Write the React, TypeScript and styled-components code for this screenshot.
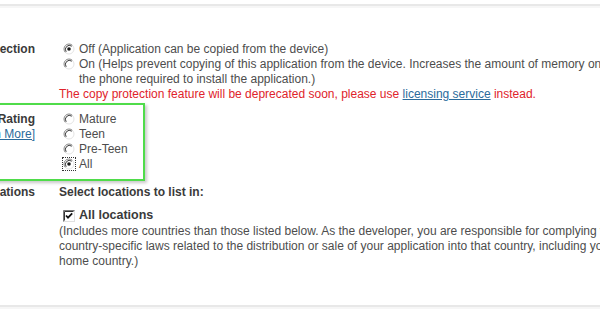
import React from 'react'
import styled, { createGlobalStyle } from 'styled-components';

const GlobalStyle = createGlobalStyle`
  html, body {
    margin: 0;
    padding: 0;
    background: #ffffff;
    overflow: hidden;
  }
  body {
    font-family: "Liberation Sans", Arial, sans-serif;
    font-size: 12px;
    color: #4d4d4d;
  }
`;

function RadioIcon({ checked, focused }: { checked?: boolean; focused?: boolean }) {
  return (
    <RadioBox $focused={focused}>
      <svg width="12" height="12" viewBox="0 0 12 12">
        <circle cx="6" cy="6" r="5" fill="#ffffff" />
        <path d="M2.46 9.54 A5 5 0 0 1 9.54 2.46" fill="none" stroke="#8a8a8a" strokeWidth="1" />
        <path d="M3.2 8.8 A4 4 0 0 1 8.8 3.2" fill="none" stroke="#3c3c3c" strokeWidth="1" />
        <path d="M9.54 2.46 A5 5 0 0 1 2.46 9.54" fill="none" stroke="#e4e4e4" strokeWidth="1" />
        {checked && <circle cx="6" cy="6" r="1.8" fill="#1a1a1a" />}
      </svg>
    </RadioBox>
  )
}

function CheckIcon() {
  return (
    <svg width="12" height="12" viewBox="0 0 12 12">
      <rect x="0.5" y="0.5" width="11" height="11" fill="#ffffff" stroke="#e0e0e0" />
      <path d="M0.5 11.5 V0.5 H11.5" fill="none" stroke="#7a7a7a" />
      <path d="M1.5 10.5 V1.5 H10.5" fill="none" stroke="#333333" />
      <path d="M3 5.5 L5 7.6 L9.2 3.4" fill="none" stroke="#111111" strokeWidth="1.8" />
    </svg>
  )
}

function App() {
  return (
    <>
      <GlobalStyle />
      <Page>
        <Separator />
        <Row $top={34}>
          <Label>Copy Protection</Label>
          <Field>
            <Option>
              <RadioIcon checked />
              <span>Off (Application can be copied from the device)</span>
            </Option>
            <Option>
              <RadioIcon />
              <span>
                On (Helps prevent copying of this application from the device. Increases the amount of memory on
                <br />
                the phone required to install the application.)
              </span>
            </Option>
            <Warning>
              The copy protection feature will be deprecated soon, please use <Link>licensing service</Link> instead.
            </Warning>
          </Field>
        </Row>

        <Highlight>
          <Row $top={0}>
            <Label>
              Content Rating
              <br />
              <Link>[Learn More]</Link>
            </Label>
            <Field>
              <Option>
                <RadioIcon />
                <span>Mature</span>
              </Option>
              <Option>
                <RadioIcon />
                <span>Teen</span>
              </Option>
              <Option>
                <RadioIcon />
                <span>Pre-Teen</span>
              </Option>
              <Option>
                <RadioIcon checked focused />
                <span>All</span>
              </Option>
            </Field>
          </Row>
        </Highlight>

        <Row $top={4}>
          <Label>Locations</Label>
          <Field>
            <FieldTitle>Select locations to list in:</FieldTitle>
            <CheckRow>
              <CheckIcon />
              <CheckLabel>All locations</CheckLabel>
            </CheckRow>
            <Note>
              (Includes more countries than those listed below. As the developer, you are responsible for complying with
              <br />
              country-specific laws related to the distribution or sale of your application into that country, including your
              <br />
              home country.)
            </Note>
          </Field>
        </Row>
        <Separator $top={36} />
      </Page>
    </>
  )
}

const Page = styled.div`
  padding-top: 4px;
  width: 600px;
  height: 315px;
  overflow: hidden;
`;

const Separator = styled.div<{ $top?: number }>`
  height: 2px;
  background: #e8e8e8;
  margin-top: ${p => p.$top ?? 0}px;
  border-bottom: 2px solid #f6f6f6;
`;

const Row = styled.div<{ $top: number }>`
  display: grid;
  grid-template-columns: 120px 1fr;
  column-gap: 24px;
  margin-top: ${p => p.$top}px;
  margin-left: -85px;
  line-height: 15px;
`;

const Highlight = styled.div`
  box-sizing: border-box;
  margin-top: 1px;
  margin-left: -10px;
  width: 155px;
  padding: 7px 0 7px 8px;
  border: 2px solid #4fdc4a;
  box-shadow: 2px 2px 3px rgba(0, 0, 0, 0.22);
`;

const Label = styled.div`
  text-align: right;
  font-weight: bold;
  color: #3a3a3a;
  white-space: nowrap;
`;

const Field = styled.div`
  display: flex;
  flex-direction: column;
  white-space: nowrap;
`;

const Option = styled.div`
  display: flex;
  align-items: flex-start;
  padding-left: 3px;
`;

const RadioBox = styled.span<{ $focused?: boolean }>`
  display: inline-flex;
  align-items: center;
  justify-content: center;
  width: 14px;
  height: 14px;
  margin-right: 3px;
  box-sizing: border-box;
  border: 1px dotted ${p => (p.$focused ? '#333333' : 'transparent')};
`;

const Warning = styled.div`
  color: #e0232b;
`;

const Link = styled.a`
  color: #2b6b9c;
  text-decoration: underline;
  font-weight: normal;
  cursor: pointer;
`;

const FieldTitle = styled.div`
  font-weight: bold;
  color: #3a3a3a;
`;

const CheckRow = styled.div`
  display: flex;
  align-items: center;
  gap: 4px;
  height: 15px;
  margin-top: 8px;
  padding-left: 4px;
`;

const CheckLabel = styled.span`
  font-weight: bold;
  font-size: 12.5px;
  color: #3a3a3a;
`;

const Note = styled.div`
  margin-top: 1px;
`;

export default App
